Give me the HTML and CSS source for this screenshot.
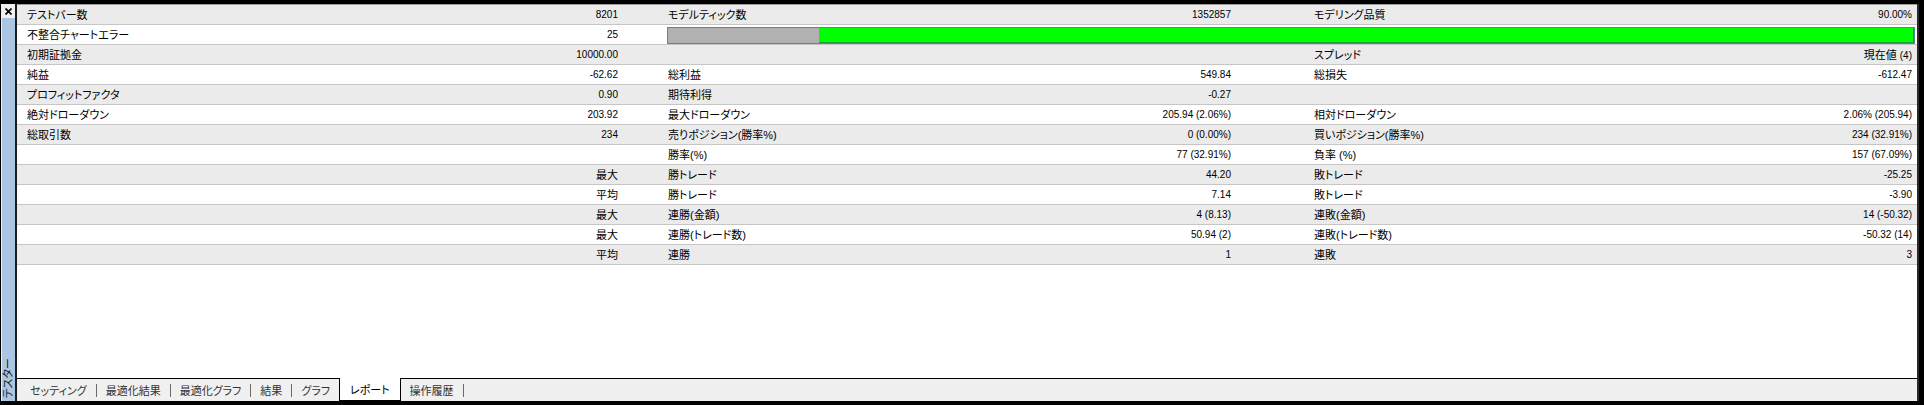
FILE: index.html
```html
<!DOCTYPE html>
<html lang="ja">
<head>
    <meta charset="UTF-8">
    <title>テスター - レポート</title>
    <link rel="stylesheet" href="styles.css">
</head>
<body>

    <div class="window">
        <div class="sidebar">
            <div class="close">
                <svg width="7" height="7" viewBox="0 0 7 7"><path d="M0.5 0.5 L6.5 6.5 M6.5 0.5 L0.5 6.5" stroke="#000" stroke-width="1.6"/></svg>
            </div>
            <div class="handle"><span class="handle-title">テスター</span></div>
        </div>

        <div class="main">
            <div class="report">
                <div class="row">
                    <span class="l1">テストバー数</span><span class="v1 num">8201</span>
                    <span class="l2">モデルティック数</span><span class="v2 num">1352857</span>
                    <span class="l3">モデリング品質</span><span class="v3 num">90.00%</span>
                </div>
                <div class="row">
                    <span class="l1">不整合チャートエラー</span><span class="v1 num">25</span>
                    <span class="quality">
                        <span class="bar"><span class="bar-gray"></span><span class="bar-green"></span></span>
                    </span>
                </div>
                <div class="row">
                    <span class="l1">初期証拠金</span><span class="v1 num">10000.00</span>
                    <span class="l2"></span><span class="v2"></span>
                    <span class="l3">スプレッド</span><span class="v3">現在値 <span class="num">(4)</span></span>
                </div>
                <div class="row">
                    <span class="l1">純益</span><span class="v1 num">-62.62</span>
                    <span class="l2">総利益</span><span class="v2 num">549.84</span>
                    <span class="l3">総損失</span><span class="v3 num">-612.47</span>
                </div>
                <div class="row">
                    <span class="l1">プロフィットファクタ</span><span class="v1 num">0.90</span>
                    <span class="l2">期待利得</span><span class="v2 num">-0.27</span>
                    <span class="l3"></span><span class="v3"></span>
                </div>
                <div class="row">
                    <span class="l1">絶対ドローダウン</span><span class="v1 num">203.92</span>
                    <span class="l2">最大ドローダウン</span><span class="v2 num">205.94 (2.06%)</span>
                    <span class="l3">相対ドローダウン</span><span class="v3 num">2.06% (205.94)</span>
                </div>
                <div class="row">
                    <span class="l1">総取引数</span><span class="v1 num">234</span>
                    <span class="l2">売りポジション(勝率%)</span><span class="v2 num">0 (0.00%)</span>
                    <span class="l3">買いポジション(勝率%)</span><span class="v3 num">234 (32.91%)</span>
                </div>
                <div class="row">
                    <span class="l1"></span><span class="v1"></span>
                    <span class="l2">勝率(%)</span><span class="v2 num">77 (32.91%)</span>
                    <span class="l3">負率 (%)</span><span class="v3 num">157 (67.09%)</span>
                </div>
                <div class="row">
                    <span class="l1"></span><span class="v1">最大</span>
                    <span class="l2">勝トレード</span><span class="v2 num">44.20</span>
                    <span class="l3">敗トレード</span><span class="v3 num">-25.25</span>
                </div>
                <div class="row">
                    <span class="l1"></span><span class="v1">平均</span>
                    <span class="l2">勝トレード</span><span class="v2 num">7.14</span>
                    <span class="l3">敗トレード</span><span class="v3 num">-3.90</span>
                </div>
                <div class="row">
                    <span class="l1"></span><span class="v1">最大</span>
                    <span class="l2">連勝(金額)</span><span class="v2 num">4 (8.13)</span>
                    <span class="l3">連敗(金額)</span><span class="v3 num">14 (-50.32)</span>
                </div>
                <div class="row">
                    <span class="l1"></span><span class="v1">最大</span>
                    <span class="l2">連勝(トレード数)</span><span class="v2 num">50.94 (2)</span>
                    <span class="l3">連敗(トレード数)</span><span class="v3 num">-50.32 (14)</span>
                </div>
                <div class="row">
                    <span class="l1"></span><span class="v1">平均</span>
                    <span class="l2">連勝</span><span class="v2 num">1</span>
                    <span class="l3">連敗</span><span class="v3 num">3</span>
                </div>
            </div>

            <div class="tabs">
                <span class="tab">セッティング</span><span class="sep"></span>
                <span class="tab">最適化結果</span><span class="sep"></span>
                <span class="tab">最適化グラフ</span><span class="sep"></span>
                <span class="tab">結果</span><span class="sep"></span>
                <span class="tab">グラフ</span>
                <span class="tab active">レポート</span>
                <span class="tab">操作履歴</span><span class="sep"></span>
            </div>
        </div>
    </div>

</body>
</html>
```

FILE: styles.css
```css
body {
    margin: 0;
    background-color: #000;
    font-family: "Liberation Sans", "Noto Sans CJK JP", sans-serif;
    font-size: 11px;
    font-feature-settings: "palt";
    color: #000;
}
.window {
    display: flex;
    height: 397px;
    margin: 4px 5px 4px 1px;
}
/* Docked "テスター" handle on the left */
.sidebar {
    width: 14px;
    display: flex;
    flex-direction: column;
    background-color: #f0f0f0;
}
.close {
    height: 14px;
    display: flex;
    align-items: center;
    justify-content: center;
}
.close svg {
    display: block;
}
.handle {
    flex: 1;
    margin-left: 1px;
    background-color: #abc6e3;
    display: flex;
    flex-direction: column;
    justify-content: flex-end;
    align-items: center;
    padding-bottom: 3px;
}
.handle-title {
    writing-mode: vertical-rl;
    text-orientation: sideways;
    transform: rotate(180deg);
    font-size: 11px;
    line-height: 13px;
    color: #1a1a1a;
}
.main {
    flex: 1;
    display: flex;
    flex-direction: column;
    background-color: #fff;
    border-left: 2px solid #1c1c1c;
    border-right: 2px solid #2a2a2a;
}
/* Report table */
.report {
    flex: 1;
    border-top: 1px solid #9c9c9c;
}
.row {
    display: grid;
    grid-template-columns: 300px 305px 378px 235px 365px 317px;
    height: 19px;
    line-height: 20px;
    border-bottom: 1px solid #c6c6c6;
}
.row:nth-child(odd) {
    background-color: #ebebeb;
}
.row span {
    white-space: nowrap;
}
.l1 { padding-left: 10px; }
.l2 { padding-left: 46px; }
.l3 { padding-left: 79px; }
.v1, .v2, .v3 {
    text-align: right;
    padding-right: 4px;
}
.v3 { padding-right: 5px; }
.num {
    font-size: 10px;
}
/* Modelling quality bar */
.quality {
    grid-column: 3 / 7;
    padding: 2px 2px 0 45px;
}
.bar {
    display: flex;
    height: 15px;
    border: 1px solid #5f8399;
}
.bar-gray {
    width: 151px;
    background-color: #b1b1b1;
}
.bar-green {
    flex: 1;
    background-color: #00ff00;
    border-right: 1px solid #1f9a3a;
    border-bottom: 1px solid #1f9a3a;
}
/* Bottom tab strip */
.tabs {
    height: 22px;
    border-top: 1px solid #000;
    background-color: #f0f0f0;
    display: flex;
    align-items: center;
    padding-left: 4px;
    font-size: 11px;
}
.tab {
    padding: 0 9px;
    color: #333;
    white-space: nowrap;
}
.tab.active {
    align-self: stretch;
    margin-top: -1px;
    padding: 0 10px;
    display: flex;
    align-items: center;
    background-color: #fff;
    border: 1px solid #000;
    border-top: none;
    color: #000;
}
.sep {
    width: 1px;
    height: 13px;
    background-color: #6a6a6a;
}
```
